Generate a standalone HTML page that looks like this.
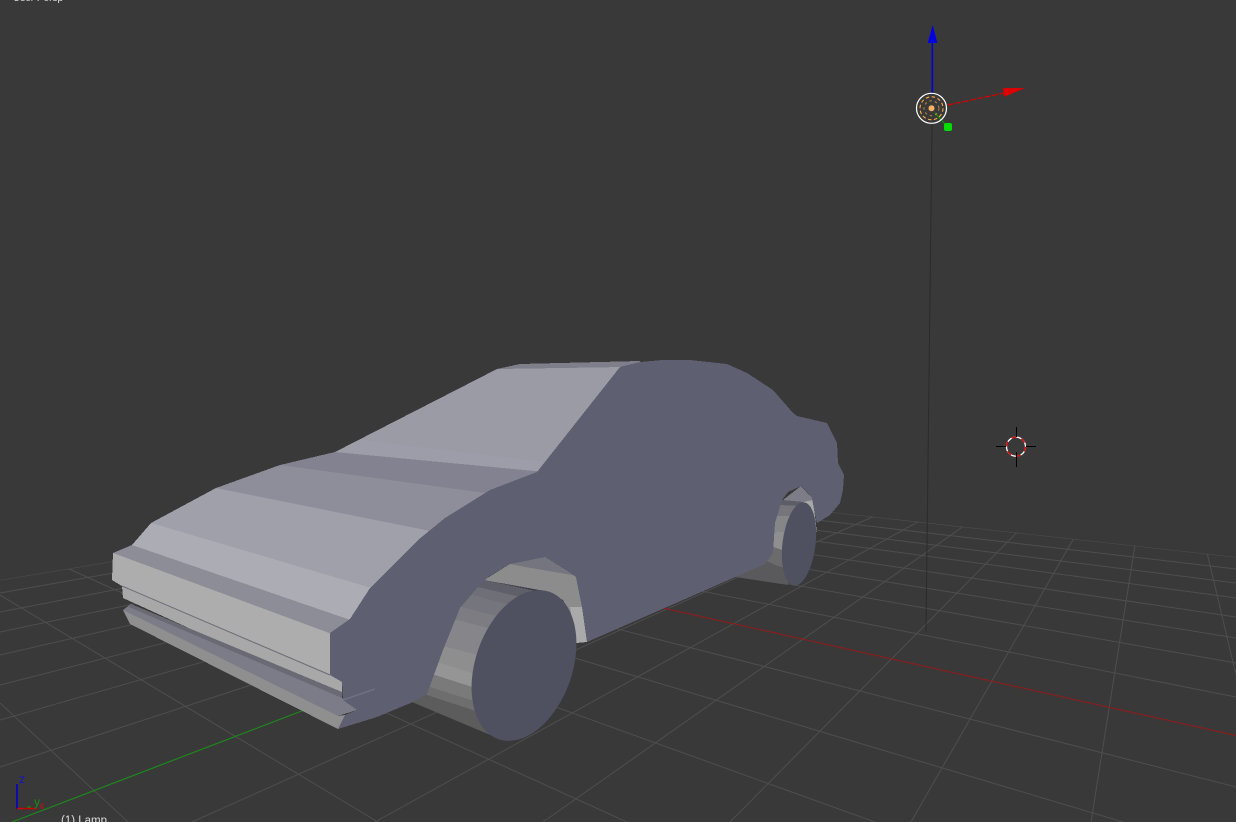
<!DOCTYPE html>
<html><head><meta charset="utf-8"><style>
html,body{margin:0;padding:0;width:1236px;height:822px;overflow:hidden;background:#393939}
svg{display:block}
text{font-family:"Liberation Sans",sans-serif}
</style></head><body>
<svg width="1236" height="822" viewBox="0 0 1236 822" xmlns="http://www.w3.org/2000/svg">
<defs>
<clipPath id="g"><polygon points="577,484 1236,557 1236,822 0,822 0,580"/></clipPath>
<clipPath id="ft"><polygon points="400,695 412,702 500,739 530,665 545,590 480,570 440,640"/></clipPath>
<clipPath id="rt"><polygon points="735,577 788,585 799,544 805,498 775,490 762,540"/></clipPath>
</defs>
<rect width="1236" height="822" fill="#393939"/>
<g clip-path="url(#g)" stroke="#4e4e4e" stroke-width="1" fill="none">
<path d="M0 580L1160 388M0 593L1160 388M0 612L1160 388M0 632L1160 388M0 655L1160 388M0 685L1160 388M0 720L1160 388M0 767L1160 388M192 822L1160 388M375 822L1160 388M543 822L1160 388M730 822L1160 388M911 822L1160 388M1091 822L1160 388M1236 675L1168 388"/>
<path d="M577 484L1236 557M-338 385L1236 569M-338 385L1236 583M-338 385L1236 598M-338 385L1236 617M-338 385L1236 638M-338 385L1236 663M-338 385L1236 697M-338 385L1236 787M-338 385L1123 822M-338 385L875 822M67 568L627 822M0 595L378 822M0 703L128 822"/>
</g>
<path d="M600 594L1236 735.5" stroke="#8f1c1c" stroke-width="1.1" fill="none"/>
<path d="M12 822L320 704" stroke="#1e861e" stroke-width="1.2" fill="none"/>
<path d="M932 125L926 632" stroke="#2b2b2b" stroke-width="1" fill="none"/>

<!-- rear wheel -->
<g shape-rendering="crispEdges">
<g clip-path="url(#rt)">
<polygon points="735,577 760,566 770,545 800,555 800,590 788,585" fill="#5a5a5c"/>
<polygon points="765,560 773,546 800,556 800,573 775,565" fill="#6b6b6d"/>
<polygon points="770,530 800,530 800,556 770,546" fill="#8f8f8f"/>
<polygon points="770,515 800,515 800,532 770,532" fill="#868688"/>
<polygon points="775,503 800,503 800,516 770,516" fill="#75757b"/>
</g>
<polygon points="779,498 783,500 810,502 800,506 779,505" fill="#5d5d68"/>
<polygon points="783,500 801,486 812,498 814,503" fill="#7c7d86"/>
<polygon points="803,502 813,500 817,533 813,518" fill="#a8a8a8"/>
</g>
<ellipse cx="799" cy="544" rx="16.5" ry="42" transform="rotate(7 799 544)" fill="#4f5060"/>

<!-- front wheel tyre -->
<g shape-rendering="crispEdges">
<g clip-path="url(#ft)">
<polygon points="405,700 412,702 500,740 540,700 480,690 420,685" fill="#505050"/>
<polygon points="474,577 490,578 540,590 560,610 500,600 470,590" fill="#3f3f4a"/>
<polygon points="470,583 485,580 540,592 560,612 530,610 468,592" fill="#5f5f6a"/>
<polygon points="464,590 478,587 550,604 550,622 470,600" fill="#6f6f78"/>
<polygon points="456,598 472,595 550,616 550,632 456,612" fill="#75757d"/>
<polygon points="452,607 462,607 550,630 550,650 448,625" fill="#7c7c82"/>
<polygon points="448,620 457,620 550,644 550,680 438,652" fill="#86868a"/>
<polygon points="438,647 447,647 550,674 550,692 432,668" fill="#8e8e8e"/>
<polygon points="432,663 440,663 550,698 550,712 428,680" fill="#959595"/>
<polygon points="428,675 435,675 550,712 550,725 424,692" fill="#7a7a7a"/>
<polygon points="424,687 430,687 550,725 550,740 420,698" fill="#6e6e6e"/>
<polygon points="420,692 427,695 540,732 500,740 412,702" fill="#5c5c5c"/>
</g>
<polygon points="484,580 510,564 545,557 576,577 582,607 587,642 576,643 573,623 563,600 545,591" fill="#8c8c8c"/>
<polygon points="510,564 545,557 572,575 525,567" fill="#74757f"/>
<polygon points="570,607 582,607 587,642 576,643" fill="#aaaaaa"/>
</g>
<ellipse cx="524" cy="665.5" rx="48.5" ry="78" transform="rotate(19 524 665.5)" fill="#4f5060"/>

<g shape-rendering="crispEdges">
<!-- roof / windshield / hood -->
<polygon points="497,369 520,364 640,361 650,375 620,372" fill="#7f7f8c"/>
<polygon points="497,369 625,367 545,480 335,452" fill="#9b9ba6"/>
<polygon points="360,440 552,463 540,478 335,452" fill="#9d9da9"/>
<polygon points="335,452 545,472 500,500 280,465" fill="#828290"/>
<polygon points="280,465 500,495 440,535 216,488" fill="#8e8e9a"/>
<polygon points="216,488 440,533 385,595 151,523" fill="#a0a0aa"/>
<polygon points="151,523 385,592 365,628 132,545" fill="#abacb4"/>
<polygon points="132,545 365,625 340,640 113,553" fill="#8d8d98"/>
<polygon points="113,553 340,637 340,680 122,586 112,580" fill="#adadad"/>
<polygon points="122,586 330,675 342,682 342,698 123,598" fill="#a8a8a8"/>
<polygon points="123,610 131,604 342,698 357,710 338,716" fill="#7c7c88"/>
<polygon points="131,604 342,692 342,698 129,607" fill="#6a6a74"/>
<polygon points="123,610 338,716 345,715 338,729 130,624" fill="#8f8f8f"/>
</g>
<path d="M122 586L330 675" stroke="#6c6c74" stroke-width="1" fill="none"/>

<!-- body side -->
<polygon shape-rendering="crispEdges" fill="#5e5f70" points="620,367 640,362 662,360 690,360 727,364 747,373 773,390 793,413 797,416 827,423 832,433 837,443 838,463 844,475 843,490 840,503 830,515 817,523 815,515 812,498 807,492 801,486 788,492 782,500 775,523 773,553 765,564 740,575 587,642 582,607 576,577 545,557 510,564 488,577 478,587 460,608 443,650 427,694 413,702 377,717 338,729 345,715 357,710 343,700 342,682 330,675 330,633 350,619 370,588 418,540 445,518 490,490 537,472"/>
<path d="M343 700L375 689" stroke="#6f7080" stroke-width="1.5" fill="none"/>

<!-- manipulator -->
<path d="M932.3 93V43" stroke="#0000d8" stroke-width="1.6" fill="none"/>
<polygon points="932.7,25 937.3,43 927.7,43" fill="#0000e0"/>
<path d="M948 105L1004 93" stroke="#d80000" stroke-width="1.2" stroke-dasharray="6 1.5" fill="none"/>
<polygon points="1003,88 1025,88 1004,97" fill="#dc0000"/>
<path d="M935 113L945 124" stroke="#00a000" stroke-width="1" fill="none"/>
<rect x="944" y="123" width="8" height="8" rx="2" fill="#00dc00"/>
<circle cx="931.5" cy="108.3" r="15" fill="none" stroke="#fff" stroke-width="1.2"/>
<circle cx="931.5" cy="108.3" r="11.5" fill="none" stroke="#ffa840" stroke-width="1.1" stroke-dasharray="3.5 2.5"/>
<circle cx="931.5" cy="108.3" r="7.5" fill="none" stroke="#ffa840" stroke-width="0.9" stroke-dasharray="2.5 3" opacity=".75"/>
<circle cx="931.5" cy="108.3" r="3" fill="#ffb060"/>

<!-- 3D cursor -->
<circle cx="1016" cy="446.7" r="9.5" fill="none" stroke="#fff" stroke-width="1.3"/>
<circle cx="1016" cy="446.7" r="9.5" fill="none" stroke="#e00000" stroke-width="1.3" stroke-dasharray="5 5"/>
<path d="M996 446.5H1006M1026 446.5H1036M1016.5 427V437M1016.5 452V467" stroke="#000" stroke-width="1" fill="none" shape-rendering="crispEdges"/>

<!-- axis widget -->
<path d="M17 784V809" stroke="#0000c8" stroke-width="1.6" fill="none"/>
<path d="M17 808.5H37" stroke="#c80000" stroke-width="1.6" fill="none"/>
<path d="M27 807H31" stroke="#00a000" stroke-width="1" fill="none"/>
<text x="19" y="783" font-size="12" fill="#1515c0">z</text>
<text x="34" y="806" font-size="12" fill="#109010">y</text>
<text x="39" y="809" font-size="11" fill="#b01818">x</text>

<text x="13" y="1" font-size="10" fill="#dddddd">User Persp</text>
<text x="61" y="824" font-size="11.5" fill="#dddddd">(1) Lamp</text>
</svg>
</body></html>
